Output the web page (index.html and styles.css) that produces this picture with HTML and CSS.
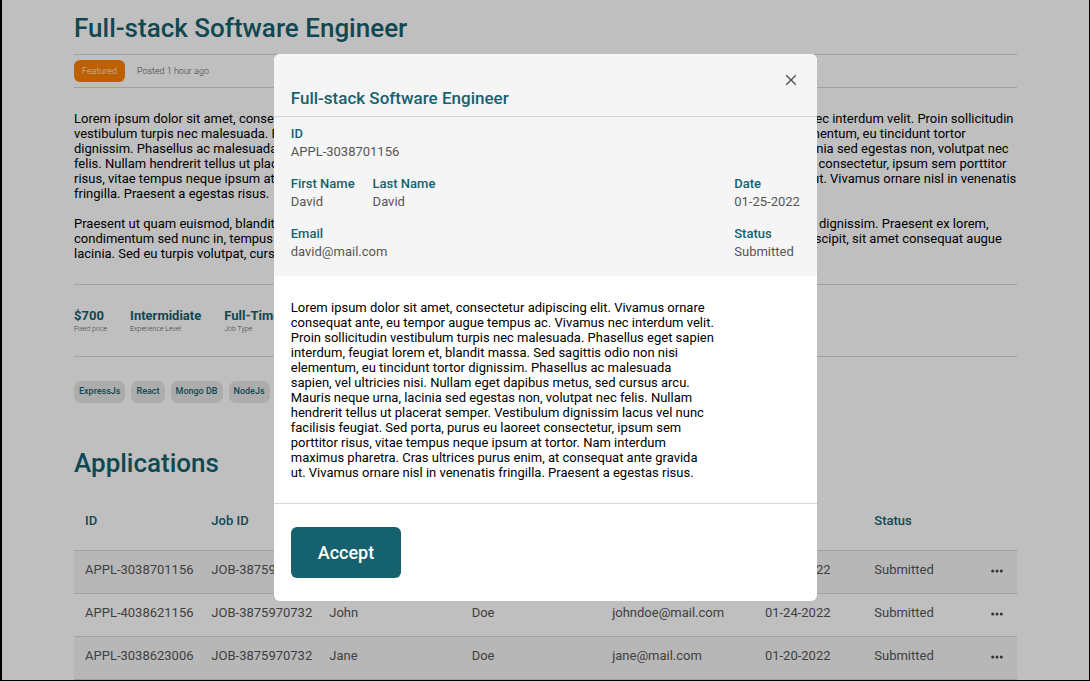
FILE: index.html
```html
<!DOCTYPE html>
<html lang="en">
<head>
<meta charset="utf-8">
<meta name="viewport" content="width=device-width, initial-scale=1">
<title>Full-stack Software Engineer</title>
<link rel="stylesheet" href="styles.css">
</head>
<body>
<main class="page">
  <h1 class="page-title">Full-stack Software Engineer</h1>
  <div class="meta">
    <span class="badge">Featured</span>
    <span class="posted">Posted 1 hour ago</span>
  </div>
  <div class="description">
    <p>Lorem ipsum dolor sit amet, consectetur adipiscing elit. Vivamus ornare consequat ante, eu tempor augue tempus ac. Vivamus nec interdum velit. Proin sollicitudin vestibulum turpis nec malesuada. Phasellus eget sapien interdum, feugiat lorem et, blandit massa. Sed sagittis odio non nisi elementum, eu tincidunt tortor dignissim. Phasellus ac malesuada sapien, vel ultricies nisi. Nullam eget dapibus metus, sed cursus arcu. Mauris neque urna, lacinia sed egestas non, volutpat nec felis. Nullam hendrerit tellus ut placerat semper. Vestibulum dignissim lacus vel nunc facilisis feugiat. Sed porta, purus eu laoreet consectetur, ipsum sem porttitor risus, vitae tempus neque ipsum at tortor. Nam interdum maximus pharetra. Cras ultrices purus enim, at consequat ante gravida ut. Vivamus ornare nisl in venenatis fringilla. Praesent a egestas risus.</p>
    <p>Praesent ut quam euismod, blandit ligula vitae, pretium nisl. Sed vel lectus sit amet augue viverra posuere. Donec in lectus erat ut dignissim. Praesent ex lorem, condimentum sed nunc in, tempus varius sapien. Aliquam erat volutpat. Nulla facilisi. Morbi ac elit nunc lacus. Integer diam ut suscipit, sit amet consequat augue lacinia. Sed eu turpis volutpat, cursus nisl a, porta erat.</p>
  </div>
  <dl class="facts">
    <div class="fact"><dd>$700</dd><dt>Fixed price</dt></div>
    <div class="fact"><dd>Intermidiate</dd><dt>Experience Level</dt></div>
    <div class="fact"><dd>Full-Time</dd><dt>Job Type</dt></div>
  </dl>
  <ul class="tags">
    <li>ExpressJs</li>
    <li>React</li>
    <li>Mongo DB</li>
    <li>NodeJs</li>
  </ul>
  <h2 class="section-title">Applications</h2>
  <table class="applications">
    <colgroup>
      <col class="col-id"><col class="col-job"><col class="col-first"><col class="col-last"><col class="col-email"><col class="col-date"><col class="col-status"><col>
    </colgroup>
    <thead>
      <tr><th>ID</th><th>Job ID</th><th>First Name</th><th>Last Name</th><th>Email</th><th>Date</th><th>Status</th><td></td></tr>
    </thead>
    <tbody>
      <tr><td>APPL-3038701156</td><td>JOB-3875970732</td><td>David</td><td>David</td><td>david@mail.com</td><td>01-25-2022</td><td>Submitted</td>
        <td class="actions"><button class="more" type="button" aria-label="More actions"><svg viewBox="0 0 12 4"><circle cx="1.7" cy="2" r="1.5"/><circle cx="6" cy="2" r="1.5"/><circle cx="10.3" cy="2" r="1.5"/></svg></button></td></tr>
      <tr><td>APPL-4038621156</td><td>JOB-3875970732</td><td>John</td><td>Doe</td><td>johndoe@mail.com</td><td>01-24-2022</td><td>Submitted</td>
        <td class="actions"><button class="more" type="button" aria-label="More actions"><svg viewBox="0 0 12 4"><circle cx="1.7" cy="2" r="1.5"/><circle cx="6" cy="2" r="1.5"/><circle cx="10.3" cy="2" r="1.5"/></svg></button></td></tr>
      <tr><td>APPL-3038623006</td><td>JOB-3875970732</td><td>Jane</td><td>Doe</td><td>jane@mail.com</td><td>01-20-2022</td><td>Submitted</td>
        <td class="actions"><button class="more" type="button" aria-label="More actions"><svg viewBox="0 0 12 4"><circle cx="1.7" cy="2" r="1.5"/><circle cx="6" cy="2" r="1.5"/><circle cx="10.3" cy="2" r="1.5"/></svg></button></td></tr>
    </tbody>
  </table>
</main>

<div class="overlay">
  <section class="modal" role="dialog" aria-modal="true" aria-labelledby="modal-title">
    <header class="modal-header">
      <button class="close" type="button" aria-label="Close"><svg viewBox="0 0 12 12"><path d="M1.2 1.2 10.8 10.8M10.8 1.2 1.2 10.8"/></svg></button>
      <h2 class="modal-title" id="modal-title">Full-stack Software Engineer</h2>
    </header>
    <dl class="details">
      <div class="details-row">
        <div><dt>ID</dt><dd>APPL-3038701156</dd></div>
      </div>
      <div class="details-row">
        <div><dt>First Name</dt><dd>David</dd></div>
        <div><dt>Last Name</dt><dd>David</dd></div>
        <div class="details-end"><dt>Date</dt><dd>01-25-2022</dd></div>
      </div>
      <div class="details-row">
        <div><dt>Email</dt><dd>david@mail.com</dd></div>
        <div class="details-end"><dt>Status</dt><dd>Submitted</dd></div>
      </div>
    </dl>
    <p class="letter">Lorem ipsum dolor sit amet, consectetur adipiscing elit. Vivamus ornare consequat ante, eu tempor augue tempus ac. Vivamus nec interdum velit. Proin sollicitudin vestibulum turpis nec malesuada. Phasellus eget sapien interdum, feugiat lorem et, blandit massa. Sed sagittis odio non nisi elementum, eu tincidunt tortor dignissim. Phasellus ac malesuada sapien, vel ultricies nisi. Nullam eget dapibus metus, sed cursus arcu. Mauris neque urna, lacinia sed egestas non, volutpat nec felis. Nullam hendrerit tellus ut placerat semper. Vestibulum dignissim lacus vel nunc facilisis feugiat. Sed porta, purus eu laoreet consectetur, ipsum sem porttitor risus, vitae tempus neque ipsum at tortor. Nam interdum maximus pharetra. Cras ultrices purus enim, at consequat ante gravida ut. Vivamus ornare nisl in venenatis fringilla. Praesent a egestas risus.</p>
    <footer class="modal-footer">
      <button class="accept" type="button">Accept</button>
    </footer>
  </section>
</div>
</body>
</html>
```
FILE: styles.css
```css
:root {
  --teal: #16616e;
  --text: #555;
  --line: #d6d6d6;
  --soft: #f5f5f5;
}

* { box-sizing: border-box; }

body {
  margin: 0;
  background: #fff;
  color: #000;
  font: 13px/15px Roboto, sans-serif;
}

h1, h2, p, dl, dd, ul { margin: 0; }

.page { padding: 12px 73px 0 74px; }

.page-title,
.section-title {
  color: var(--teal);
  font-size: 26px;
  font-weight: 500;
  line-height: 32px;
}

.meta {
  display: flex;
  align-items: center;
  gap: 12px;
  height: 34px;
  margin-top: 10px;
  border-top: 1px solid var(--line);
  border-bottom: 1px solid var(--line);
  font-size: 9px;
  font-weight: 300;
}

.badge {
  padding: 4px 8px 3px;
  border-radius: 6px;
  background: #ff7f00;
  color: #fff;
}

.posted { color: #555; }

.description {
  display: grid;
  gap: 15px;
  padding: 23px 0;
  border-bottom: 1px solid var(--line);
}

.facts {
  display: flex;
  gap: 23px;
  padding: 23px 0 21px;
  border-bottom: 1px solid var(--line);
}

.fact dd {
  color: var(--teal);
  font-weight: 700;
  line-height: 16px;
}

.fact dt {
  color: #555;
  font-size: 7px;
  font-weight: 300;
  line-height: 11px;
}

.tags {
  display: flex;
  gap: 6px;
  padding: 0;
  margin-top: 24px;
  list-style: none;
}

.tags li {
  padding: 3px 5px 4px;
  border-radius: 7px;
  background: #e6e6e6;
  color: var(--teal);
  font-size: 9px;
  font-weight: 500;
}

.section-title { margin-top: 44px; }

.applications {
  width: 100%;
  margin-top: 12px;
  table-layout: fixed;
  border-collapse: collapse;
  color: var(--text);
}

.col-id { width: 13.4%; }
.col-job { width: 12.5%; }
.col-first { width: 15.1%; }
.col-last { width: 14.9%; }
.col-email { width: 16.2%; }
.col-date { width: 11.6%; }
.col-status { width: 11.9%; }

.applications th,
.applications td {
  height: 43px;
  padding: 0 0 4px 11px;
  border-bottom: 1px solid var(--line);
  text-align: left;
  white-space: nowrap;
}

.applications th {
  height: 59px;
  padding-bottom: 0;
  color: var(--teal);
  font-weight: 500;
}

.applications tbody tr:nth-child(odd) { background: var(--soft); }

.applications .actions { padding: 0 14px 4px 0; text-align: right; }

.more,
.close {
  padding: 0;
  border: 0;
  background: none;
  cursor: pointer;
}

.more { vertical-align: middle; }

.more svg {
  display: block;
  width: 12px;
  height: 4px;
  fill: #444;
}

.overlay {
  position: fixed;
  inset: 0;
  display: flex;
  align-items: flex-start;
  justify-content: center;
  padding-top: 54px;
  border: solid #000;
  border-width: 0 1px 1px 2px;
  background: rgba(0, 0, 0, 0.25);
  background-clip: padding-box;
}

.modal {
  width: 50%;
  min-width: 480px;
  overflow: hidden;
  border-radius: 6px;
  background: #fff;
}

.modal-header {
  display: flex;
  flex-direction: column;
  padding: 18px 17px 7px;
  border-bottom: 1px solid var(--line);
  background: var(--soft);
}

.close {
  align-self: flex-end;
  width: 18px;
  height: 15px;
}

.close svg {
  display: block;
  width: 12px;
  height: 12px;
  margin: 0 auto;
  fill: none;
  stroke: #555;
  stroke-width: 1.4;
}

.modal-title {
  color: var(--teal);
  font-size: 17px;
  font-weight: 500;
  line-height: 22px;
}

.details {
  display: grid;
  gap: 14px;
  padding: 8px 17px 15px;
  background: var(--soft);
  color: var(--text);
  line-height: 18px;
}

.details-row { display: flex; gap: 18px; }

.details dt { color: var(--teal); font-weight: 500; }

.details-end { width: 66px; margin-left: auto; }

.letter {
  max-width: 458px;
  padding: 24px 17px 23px;
}

.modal-footer {
  padding: 23px 17px;
  border-top: 1px solid var(--line);
}

.accept {
  height: 51px;
  padding: 0 27px;
  border: 0;
  border-radius: 6px;
  background: var(--teal);
  color: #fff;
  font: 500 18px/20px Roboto, sans-serif;
  cursor: pointer;
}
```
